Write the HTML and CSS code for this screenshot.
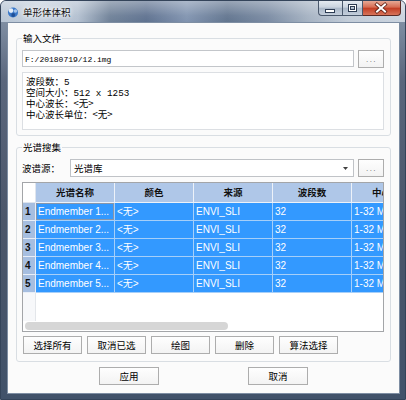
FILE: index.html
```html
<!DOCTYPE html>
<html lang="zh-CN">
<head>
<meta charset="utf-8">
<title>单形体体积</title>
<link rel="stylesheet" href="styles.css">
</head>
<body>
<div class="window">
  <div class="titlebar">
    <svg class="app-icon" width="12" height="12" viewBox="0 0 12 12">
      <circle cx="6" cy="6.5" r="5" fill="#3a78c8"/>
      <circle cx="4" cy="4.6" r="2.3" fill="#e2ecf8"/>
      <circle cx="8.4" cy="5" r="1.8" fill="#a3c3ea"/>
      <circle cx="6.2" cy="9" r="1.9" fill="#1f4f96"/>
    </svg>
    <span class="title">单形体体积</span>
    <div class="caption">
      <div class="cap cap-min">
        <svg width="24" height="15" viewBox="0 0 24 15"><rect x="7.5" y="8.5" width="9" height="3" fill="#fff" stroke="#2c3b52"/></svg>
      </div>
      <div class="cap cap-max">
        <svg width="21" height="15" viewBox="0 0 21 15"><rect x="6.5" y="3.5" width="8" height="7" fill="none" stroke="#2c3b52"/><rect x="7.5" y="4.5" width="6" height="5" fill="none" stroke="#fff"/><rect x="8.5" y="5.5" width="4" height="3" fill="none" stroke="#2c3b52"/></svg>
      </div>
      <div class="cap cap-close">
        <svg width="38" height="15" viewBox="0 0 38 15"><path d="M15 3.5 L23 10.5 M23 3.5 L15 10.5" stroke="#5a1d12" stroke-width="3.6" stroke-linecap="square"/><path d="M15 3.5 L23 10.5 M23 3.5 L15 10.5" stroke="#fff" stroke-width="2" stroke-linecap="square"/></svg>
      </div>
    </div>
  </div>

  <div class="client">
    <fieldset class="group group-file">
      <legend>输入文件</legend>
      <div class="row">
        <div class="input"><span class="mono">F:/20180719/12.img</span></div>
        <div class="btn btn-dots">...</div>
      </div>
      <div class="info">
        <div class="line">波段数：<span class="mono">5</span></div>
        <div class="line">空间大小：<span class="mono">512 x 1253</span></div>
        <div class="line">中心波长：&lt;无&gt;</div>
        <div class="line">中心波长单位：&lt;无&gt;</div>
      </div>
    </fieldset>

    <fieldset class="group group-spec">
      <legend>光谱搜集</legend>
      <div class="row">
        <div class="lbl">波谱源：</div>
        <div class="combo">
          <span>光谱库</span>
          <svg class="arrow" width="5" height="3" viewBox="0 0 5 3"><path d="M0 0 H5 L2.5 3 Z" fill="#404040"/></svg>
        </div>
        <div class="btn btn-dots">...</div>
      </div>

      <div class="table">
        <div class="grid">
          <div class="corner"></div>
          <div class="hcell">光谱名称</div>
          <div class="hcell">颜色</div>
          <div class="hcell">来源</div>
          <div class="hcell">波段数</div>
          <div class="hcell">中心波长</div>

          <div class="rnum">1</div>
          <div class="cell focus">Endmember 1...</div>
          <div class="cell">&lt;无&gt;</div>
          <div class="cell">ENVI_SLI</div>
          <div class="cell">32</div>
          <div class="cell">1-32 Micrometers</div>

          <div class="rnum">2</div>
          <div class="cell">Endmember 2...</div>
          <div class="cell">&lt;无&gt;</div>
          <div class="cell">ENVI_SLI</div>
          <div class="cell">32</div>
          <div class="cell">1-32 Micrometers</div>

          <div class="rnum">3</div>
          <div class="cell">Endmember 3...</div>
          <div class="cell">&lt;无&gt;</div>
          <div class="cell">ENVI_SLI</div>
          <div class="cell">32</div>
          <div class="cell">1-32 Micrometers</div>

          <div class="rnum">4</div>
          <div class="cell">Endmember 4...</div>
          <div class="cell">&lt;无&gt;</div>
          <div class="cell">ENVI_SLI</div>
          <div class="cell">32</div>
          <div class="cell">1-32 Micrometers</div>

          <div class="rnum">5</div>
          <div class="cell">Endmember 5...</div>
          <div class="cell">&lt;无&gt;</div>
          <div class="cell">ENVI_SLI</div>
          <div class="cell">32</div>
          <div class="cell">1-32 Micrometers</div>
        </div>
        <div class="filler"><div class="filler-head"></div></div>
        <div class="hscroll"><div class="thumb"></div></div>
      </div>

      <div class="actions">
        <div class="btn pbtn">选择所有</div>
        <div class="btn pbtn">取消已选</div>
        <div class="btn pbtn">绘图</div>
        <div class="btn pbtn">删除</div>
        <div class="btn pbtn">算法选择</div>
      </div>
    </fieldset>

    <div class="footer">
      <div class="btn pbtn">应用</div>
      <div class="btn pbtn">取消</div>
    </div>
  </div>
</div>
</body>
</html>
```

FILE: styles.css
```css
* { box-sizing: border-box; }
html, body { margin: 0; padding: 0; }
body {
  width: 406px;
  height: 400px;
  overflow: hidden;
  background: #ffffff;
  font-family: "Noto Sans CJK SC", "Liberation Sans", sans-serif;
  font-size: 9.5px;
  color: #000;
}

.window {
  width: 406px;
  height: 400px;
  display: flex;
  flex-direction: column;
  border: 1px solid #34445a;
  border-radius: 6px 6px 0 0;
  overflow: hidden;
  background: linear-gradient(180deg, #8c9cb0 0, #5a667c 20%, #4b566a 55%, #41526a 100%);
}

.titlebar {
  height: 21px;
  flex: none;
  display: flex;
  align-items: center;
  padding-left: 6px;
  background:
    linear-gradient(180deg, rgba(255,255,255,0.35) 0, rgba(255,255,255,0.05) 70%, rgba(255,255,255,0) 100%),
    linear-gradient(90deg, #b9c6d5 0, #c6d1de 10%, #b3c0d0 19%, #6f8198 27%, #5f7290 36%, #8194b0 46%, #62758f 56%, #7a8ba3 66%, #a5b2c2 76%, #c2ccd8 86%, #cad3de 100%);
}
.app-icon { flex: none; }
.title {
  margin-left: 4px;
  line-height: 12px;
  color: #111;
  text-shadow: 0 0 4px #fff, 0 0 6px rgba(255,255,255,0.9);
}

.caption {
  margin-left: auto;
  margin-right: 4px;
  align-self: flex-start;
  display: flex;
  height: 15px;
}
.cap {
  height: 15px;
  border: 1px solid #4a586c;
  border-top: none;
  position: relative;
}
.cap svg { position: absolute; left: -1px; top: 0; }
.cap-min {
  width: 24px;
  border-radius: 0 0 0 4px;
  border-right: none;
  background: linear-gradient(180deg, #e4eaf1 0, #c9d3df 45%, #a9b7c8 50%, #c4cedb 100%);
}
.cap-max {
  width: 21px;
  background: linear-gradient(180deg, #e4eaf1 0, #c9d3df 45%, #a9b7c8 50%, #c4cedb 100%);
}
.cap-close {
  width: 38px;
  border-left: none;
  border-color: #5c2a24;
  border-radius: 0 0 4px 0;
  background: linear-gradient(180deg, #e7a995 0, #d66b52 45%, #c23c22 50%, #d7745a 100%);
}

.client {
  flex: 1;
  margin: 0 5px 5px 6px;
  border: 1px solid #7e8ea3;
  background: #fbfbfb;
  display: flex;
  flex-direction: column;
}

.group {
  margin: 0 8px;
  min-width: 0;
  border: 1px solid #d9dee3;
  border-radius: 3px;
  padding: 6px 6px 5px 5px;
}
.group legend {
  padding: 0 1px;
  margin: 0;
  line-height: 12px;
  height: 12px;
  font-size: 9.5px;
}
.group-file { margin-top: 9px; }
.group-spec { margin-top: 5px; padding-bottom: 7px; }

.row {
  display: flex;
  align-items: flex-start;
  gap: 4px;
  height: 18px;
}

.mono {
  font-family: "Liberation Mono", monospace;
  font-size: 8px;
  color: #000;
}

.input {
  flex: 1;
  height: 17px;
  border: 1px solid #c3c6ca;
  background: #fff;
  padding-left: 2px;
  line-height: 15px;
}

.btn {
  border: 1px solid #adadad;
  background: linear-gradient(180deg, #fefefe 0, #f3f3f3 100%);
  text-align: center;
}
.btn-dots {
  width: 26px;
  height: 18px;
  flex: none;
  font-family: "Liberation Sans", sans-serif;
  font-size: 8px;
  letter-spacing: 1.5px;
  line-height: 17px;
  color: #666;
  padding-left: 1px;
}

.info {
  margin-top: 4px;
  height: 58px;
  border: 1px solid #dcdfe3;
  background: #fff;
  padding: 3px 3px 0;
}
.line {
  height: 11px;
  line-height: 11px;
  white-space: nowrap;
}
.line .mono { font-size: 9.3px; }

.lbl {
  width: 44px;
  flex: none;
  line-height: 18px;
}
.combo {
  flex: 1;
  height: 18px;
  border: 1px solid #c0c3c7;
  background: #fff;
  display: flex;
  align-items: center;
  justify-content: space-between;
  padding: 0 5px 0 3px;
}
.arrow { flex: none; }

.table {
  margin-top: 5px;
  height: 150px;
  border: 1px solid #a3a5a8;
  background: #fff;
  overflow: hidden;
  display: flex;
  flex-direction: column;
}
.grid {
  flex: none;
  display: grid;
  grid-template-columns: 13px repeat(5, 79px);
  grid-template-rows: 20px repeat(5, 18px);
  width: 408px;
}
.corner {
  background: #ffffff;
  border-right: 1px solid #dfe5ee;
  border-bottom: 1px solid #dfe5ee;
}
.hcell {
  background: #afc7e8;
  border-right: 1px solid #edf2f9;
  border-bottom: 1px solid #edf2f9;
  font-weight: bold;
  text-align: center;
  line-height: 19px;
  white-space: nowrap;
  overflow: hidden;
  color: #111;
}
.rnum {
  background: #a6bee0;
  border-right: 1px solid #e8eef7;
  border-bottom: 1px solid #e8eef7;
  font-family: "Liberation Sans", sans-serif;
  font-weight: bold;
  font-size: 10px;
  line-height: 17px;
  padding-left: 2px;
  color: #111;
}
.cell {
  background: #3399ff;
  color: #fff;
  border-right: 1px solid #a6cff9;
  border-bottom: 1px solid #a6cff9;
  font-family: "Liberation Sans", "Noto Sans CJK SC", sans-serif;
  font-size: 10px;
  line-height: 17px;
  padding-left: 2px;
  white-space: nowrap;
  overflow: hidden;
}
.cell.focus { box-shadow: inset 0 0 0 1px #8796ab; }

.filler {
  flex: 1;
  display: flex;
}
.filler-head {
  width: 13px;
  background: #f7f8fa;
  border-right: 1px solid #e3e6ea;
}
.hscroll {
  flex: none;
  height: 10px;
  display: flex;
  align-items: center;
  padding-left: 2px;
  background: #fff;
}
.thumb {
  width: 203px;
  height: 8px;
  border-radius: 4px;
  background: #d6d6d6;
}

.actions {
  margin-top: 4px;
  display: flex;
  gap: 5px;
  padding-left: 1px;
}
.pbtn {
  width: 59px;
  height: 18px;
  line-height: 16px;
  font-size: 9.5px;
}

.footer {
  margin-top: 5px;
  display: flex;
  justify-content: center;
  gap: 89px;
}
.footer .pbtn { width: 60px; }
```
